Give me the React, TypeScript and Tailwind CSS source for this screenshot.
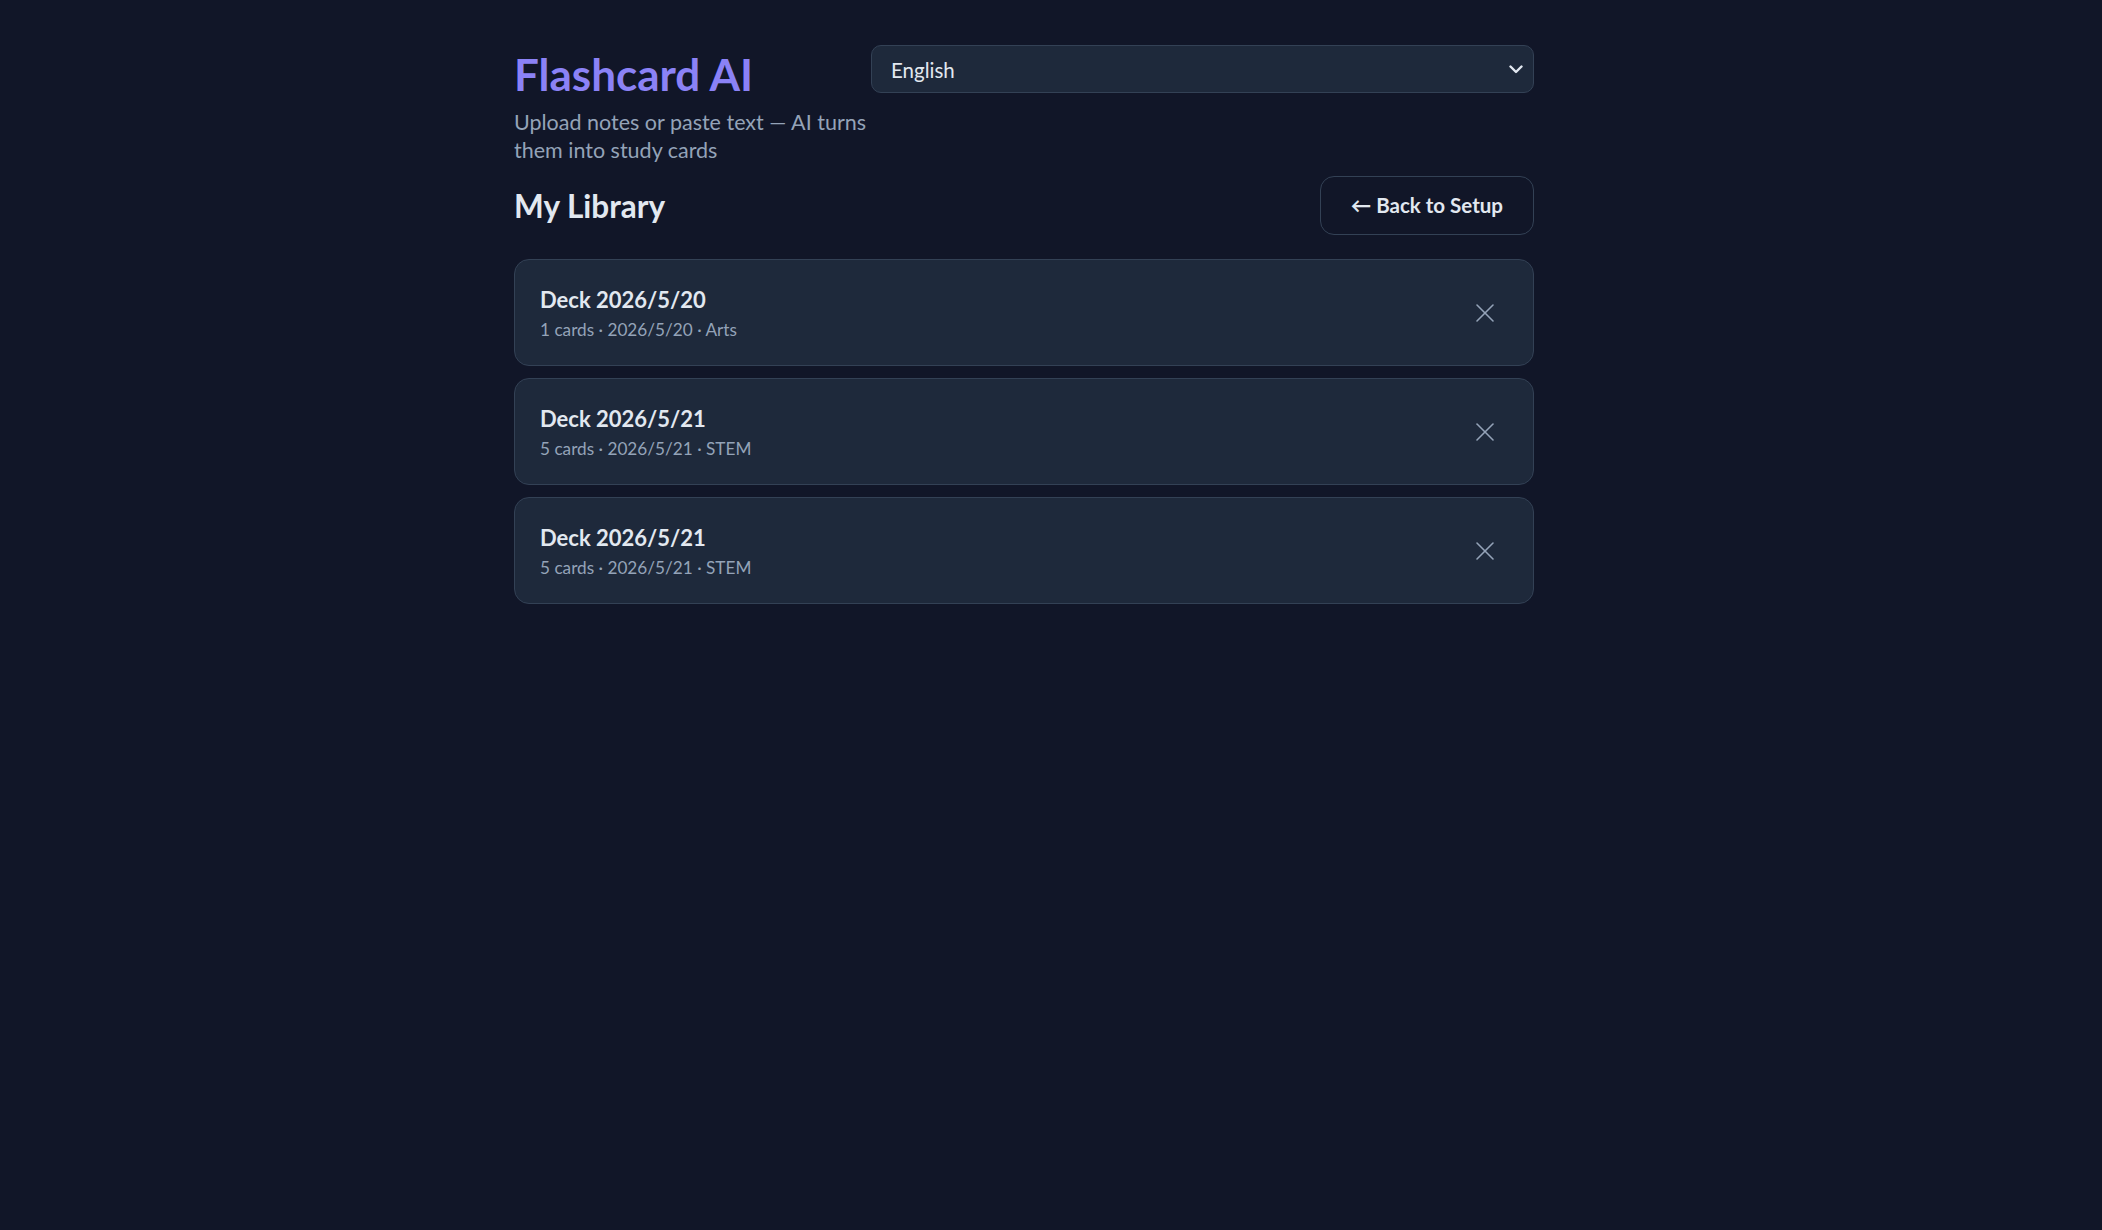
import React from "react";

type Deck = { title: string; count: number; date: string; tag: string };

const decks: Deck[] = [
  { title: "Deck 2026/5/20", count: 1, date: "2026/5/20", tag: "Arts" },
  { title: "Deck 2026/5/21", count: 5, date: "2026/5/21", tag: "STEM" },
  { title: "Deck 2026/5/21", count: 5, date: "2026/5/21", tag: "STEM" },
];

function CloseIcon() {
  return (
    <svg width="20" height="20" viewBox="0 0 20 20" fill="none" stroke="currentColor" strokeWidth="1.6" strokeLinecap="round">
      <path d="M2 2 L18 18" />
      <path d="M18 2 L2 18" />
    </svg>
  );
}

function Chevron() {
  return (
    <svg width="14" height="9" viewBox="0 0 14 9" fill="none" stroke="currentColor" strokeWidth="2.4" strokeLinecap="round" strokeLinejoin="round">
      <path d="M1.5 1.5 L7 7 L12.5 1.5" />
    </svg>
  );
}

export default function App() {
  return (
    <div className="min-h-screen bg-[#111628] font-['Lato','Noto_Sans',sans-serif] text-[#e2e8f0]">
      <div className="flex justify-center pr-[54px] pt-[49px]">
        <div className="w-[1020px]">
          {/* header: brand + language picker */}
          <header className="flex items-start">
            <div className="w-[357px]">
              <h1 className="text-[44px] leading-[50px] font-bold text-[#8b82f6]">Flashcard AI</h1>
              <p className="mt-[10px] text-[21.5px] leading-[27.5px] text-[#94a3b8]">
                Upload notes or paste text — AI turns them into study cards
              </p>
            </div>
            <div className="relative -mt-[4px] w-[663px]">
              <select
                defaultValue="en"
                className="h-[48px] w-full appearance-none rounded-[10px] border border-[#334155] bg-[#1e293b] px-[19px] pt-[2px] text-[20.5px] text-[#e2e8f0] outline-none"
              >
                <option value="en">English</option>
              </select>
              <span className="pointer-events-none absolute right-[11px] top-[20px] text-[#e2e8f0]">
                <Chevron />
              </span>
            </div>
          </header>

          {/* library title row */}
          <div className="mt-[12px] flex items-center justify-between">
            <h2 className="text-[31.5px] font-bold leading-[40px] text-[#e2e8f0]">My Library</h2>
            <button className="h-[59px] rounded-[14px] border border-[#334155] px-[30px] text-[20.5px] font-bold text-[#e2e8f0]">
              ← Back to Setup
            </button>
          </div>

          {/* deck list */}
          <ul className="mt-[24px] flex flex-col gap-[12px]">
            {decks.map((d, i) => (
              <li
                key={i}
                className="flex items-center rounded-[15px] border border-[#334155] bg-[#1e293b] pt-[24px] pb-[23px] pl-[25px] pr-[28px]"
              >
                <div className="flex-1">
                  <div className="text-[22px] font-bold leading-[31px] text-[#e2e8f0]">{d.title}</div>
                  <div className="mt-[2px] text-[17.2px] leading-[25px] text-[#94a3b8]">
                    {d.count} cards · {d.date} · {d.tag}
                  </div>
                </div>
                <button className="flex h-[40px] w-[40px] items-center justify-center text-[#94a3b8]">
                  <CloseIcon />
                </button>
              </li>
            ))}
          </ul>
        </div>
      </div>
    </div>
  );
}
